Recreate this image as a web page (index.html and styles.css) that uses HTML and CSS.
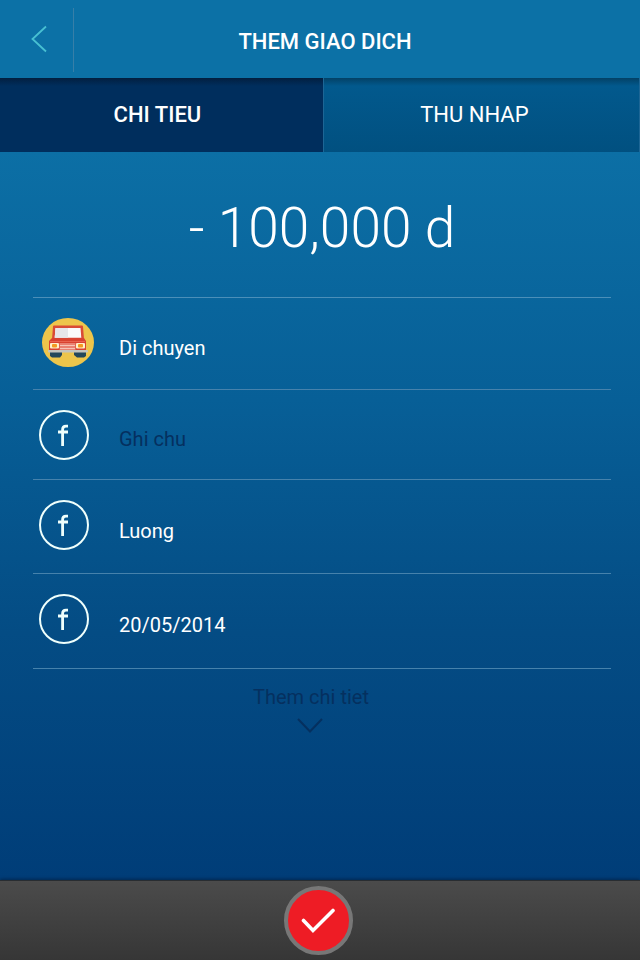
FILE: index.html
```html
<!DOCTYPE html>
<html lang="vi">
<head>
<meta charset="utf-8">
<meta name="viewport" content="width=device-width, initial-scale=1">
<title>THEM GIAO DICH</title>
<link rel="stylesheet" href="styles.css">
</head>
<body>
<header class="topbar">
  <button class="back" type="button" aria-label="Back">
    <svg width="16" height="28" viewBox="0 0 16 28"><path d="M15 1.500L1.500 14L15 26.500" fill="none" stroke="#48c0d2" stroke-width="1.800"/></svg>
  </button>
  <h1 class="title">THEM GIAO DICH</h1>
</header>
<nav class="tabs">
  <button class="tab tab-active" type="button">CHI TIEU</button>
  <button class="tab" type="button">THU NHAP</button>
</nav>
<main class="content">
  <p class="amount">- 100,000 d</p>
  <form class="fields" id="entry">
    <div class="row">
      <span class="icon icon-car">
        <svg width="52" height="50" viewBox="0 0 52 50">
          <ellipse cx="26" cy="24.500" rx="26" ry="24.500" fill="#edc54b"/>
          <path d="M8 34h12v3l-2 2.500H10l-2-1.500zM32 34h12v4l-2 1.500h-7l-3-2.500z" fill="#24475a"/>
          <path d="M12 7.500h28q1 0 1 1L42 21H10l1-12.500q0-1 1-1z" fill="#d94b36"/>
          <path d="M13.500 10H38.500l.8 9.800H12.700z" fill="#fafafa"/>
          <path d="M13.500 10H26v9.800H12.700z" fill="#e6e6e9"/>
          <path d="M10 20h32l2 3v10H7V23z" fill="#d94231"/>
          <rect x="8" y="23" width="35" height="1" fill="#e8634f"/>
          <rect x="17.500" y="25" width="16" height="7.500" fill="#e98273"/>
          <path d="M18 27.500h15M18 30.500h15" stroke="#f6c4b8"/>
          <rect x="8" y="25" width="9" height="5.500" rx="1" fill="#fff0c9"/>
          <rect x="34" y="25" width="9" height="5.500" rx="1" fill="#fff0c9"/>
          <rect x="10" y="26" width="5" height="3.500" rx="1" fill="#f49a20"/>
          <rect x="36" y="26" width="5" height="3.500" rx="1" fill="#f49a20"/>
          <rect x="6" y="32" width="40" height="2.500" rx="1" fill="#c4c4bd"/>
        </svg>
      </span>
      <button class="value" type="button">Di chuyen</button>
    </div>
    <div class="row row-short">
      <label class="icon" for="note"><svg width="50" height="50" viewBox="0 0 50 50"><circle cx="25" cy="25" r="24" class="line"/><path d="M19 22H29M29 16.200H27Q23.600 16.200 23.600 19.500V36" class="mark"/></svg></label>
      <input class="value" id="note" type="text" placeholder="Ghi chu" aria-label="Ghi chu">
    </div>
    <div class="row row-tall">
      <span class="icon"><svg width="50" height="50" viewBox="0 0 50 50"><circle cx="25" cy="25" r="24" class="line"/><path d="M19 22H29M29 16.200H27Q23.600 16.200 23.600 19.500V36" class="mark"/></svg></span>
      <button class="value" type="button">Luong</button>
    </div>
    <div class="row row-last">
      <label class="icon" for="date"><svg width="50" height="50" viewBox="0 0 50 50"><circle cx="25" cy="25" r="24" class="line"/><path d="M19 22H29M29 16.200H27Q23.600 16.200 23.600 19.500V36" class="mark"/></svg></label>
      <input class="value" id="date" type="text" value="20/05/2014" aria-label="Date">
    </div>
  </form>
  <button class="more" type="button">
    <span>Them chi tiet</span>
    <svg width="28" height="16" viewBox="0 0 28 16"><path d="M1 2L13 14.500L25 2" fill="none" stroke="#05305f" stroke-width="2"/></svg>
  </button>
</main>
<footer class="bottombar">
  <button class="confirm" type="submit" form="entry" aria-label="Save">
    <svg width="36" height="26" viewBox="0 0 36 26"><path d="M2.500 12.500L12 22.500L32 2.500" fill="none" stroke="#fff" stroke-width="3.600" stroke-linecap="round" stroke-linejoin="miter"/></svg>
  </button>
</footer>
</body>
</html>
```
FILE: styles.css
```css
* {
  box-sizing: border-box;
}

body {
  margin: 0;
  min-height: 100vh;
  display: flex;
  flex-direction: column;
  background: #003c75;
  color: #fff;
  font-family: Roboto, "Liberation Sans", sans-serif;
}

button,
input {
  margin: 0;
  padding: 0;
  border: 0;
  background: none;
  color: inherit;
  font: inherit;
}

svg {
  display: block;
}

.topbar {
  display: flex;
  align-items: center;
  height: 78px;
  padding: 2px 64px 0 0;
  background: #0c71a6;
}

.back {
  display: flex;
  align-items: center;
  justify-content: flex-end;
  width: 74px;
  height: 64px;
  padding: 0 26px 2px 0;
  border-right: 1px solid #377fa8;
}

.title {
  flex: 1;
  margin: 0;
  padding-top: 4px;
  font-size: 22px;
  line-height: 28px;
  font-weight: 500;
  text-align: center;
}

.tabs {
  display: flex;
  height: 74px;
}

.tab {
  flex: 1;
  padding: 0 14px 2px 0;
  border-right: 1px solid #1d6695;
  background: linear-gradient(#034166, #02598d 8px, #015080);
  font-size: 22px;
  text-align: center;
}

.tab-active {
  flex: 0 0 auto;
  width: 50.600%;
  padding-right: 8px;
  background: linear-gradient(#021f40, #002e5d 8px);
  font-weight: 500;
}

.content {
  flex: 1;
  padding: 0 29px 0 33px;
  background: linear-gradient(#0c6fa5, #075f97 34%, #044c84 66%, #003d78);
}

.amount {
  margin: 0;
  height: 145px;
  padding-top: 43px;
  font-size: 55px;
  line-height: 66px;
  font-weight: 300;
  text-align: center;
}

.fields {
  margin: 0;
  border-top: 1px solid #4b8fb9;
}

.row {
  display: flex;
  height: 92px;
  padding-left: 6px;
  border-bottom: 1px solid #4682ac;
}

.row-short {
  height: 90px;
}

.row-tall {
  height: 94px;
}

.row-last {
  height: 95px;
}

.icon {
  width: 80px;
  padding-top: 20px;
}

.icon-car {
  padding-left: 3px;
}

.line {
  fill: none;
  stroke: #effffc;
  stroke-width: 2;
}

.mark {
  fill: none;
  stroke: #effffc;
  stroke-width: 2.800;
}

.value {
  flex: 1;
  min-width: 0;
  padding-top: 8px;
  font-size: 20px;
  text-align: left;
}

.value::placeholder {
  color: #05305f;
  opacity: 1;
}

.more {
  display: flex;
  flex-direction: column;
  align-items: center;
  gap: 8px;
  width: 100%;
  padding: 16px 22px 0 0;
  color: #05305f;
  font-size: 20px;
  line-height: 24px;
}

.bottombar {
  display: flex;
  align-items: center;
  justify-content: center;
  height: 80px;
  padding-right: 3px;
  border-top: 1px solid #292d31;
  background: linear-gradient(#4b4b4b, #363636);
  box-shadow: 0 -1px 3px #002750;
}

.confirm {
  display: flex;
  align-items: center;
  justify-content: center;
  width: 69px;
  height: 69px;
  border: 4px solid #777;
  border-radius: 50%;
  background: #ee1c25;
}
```
